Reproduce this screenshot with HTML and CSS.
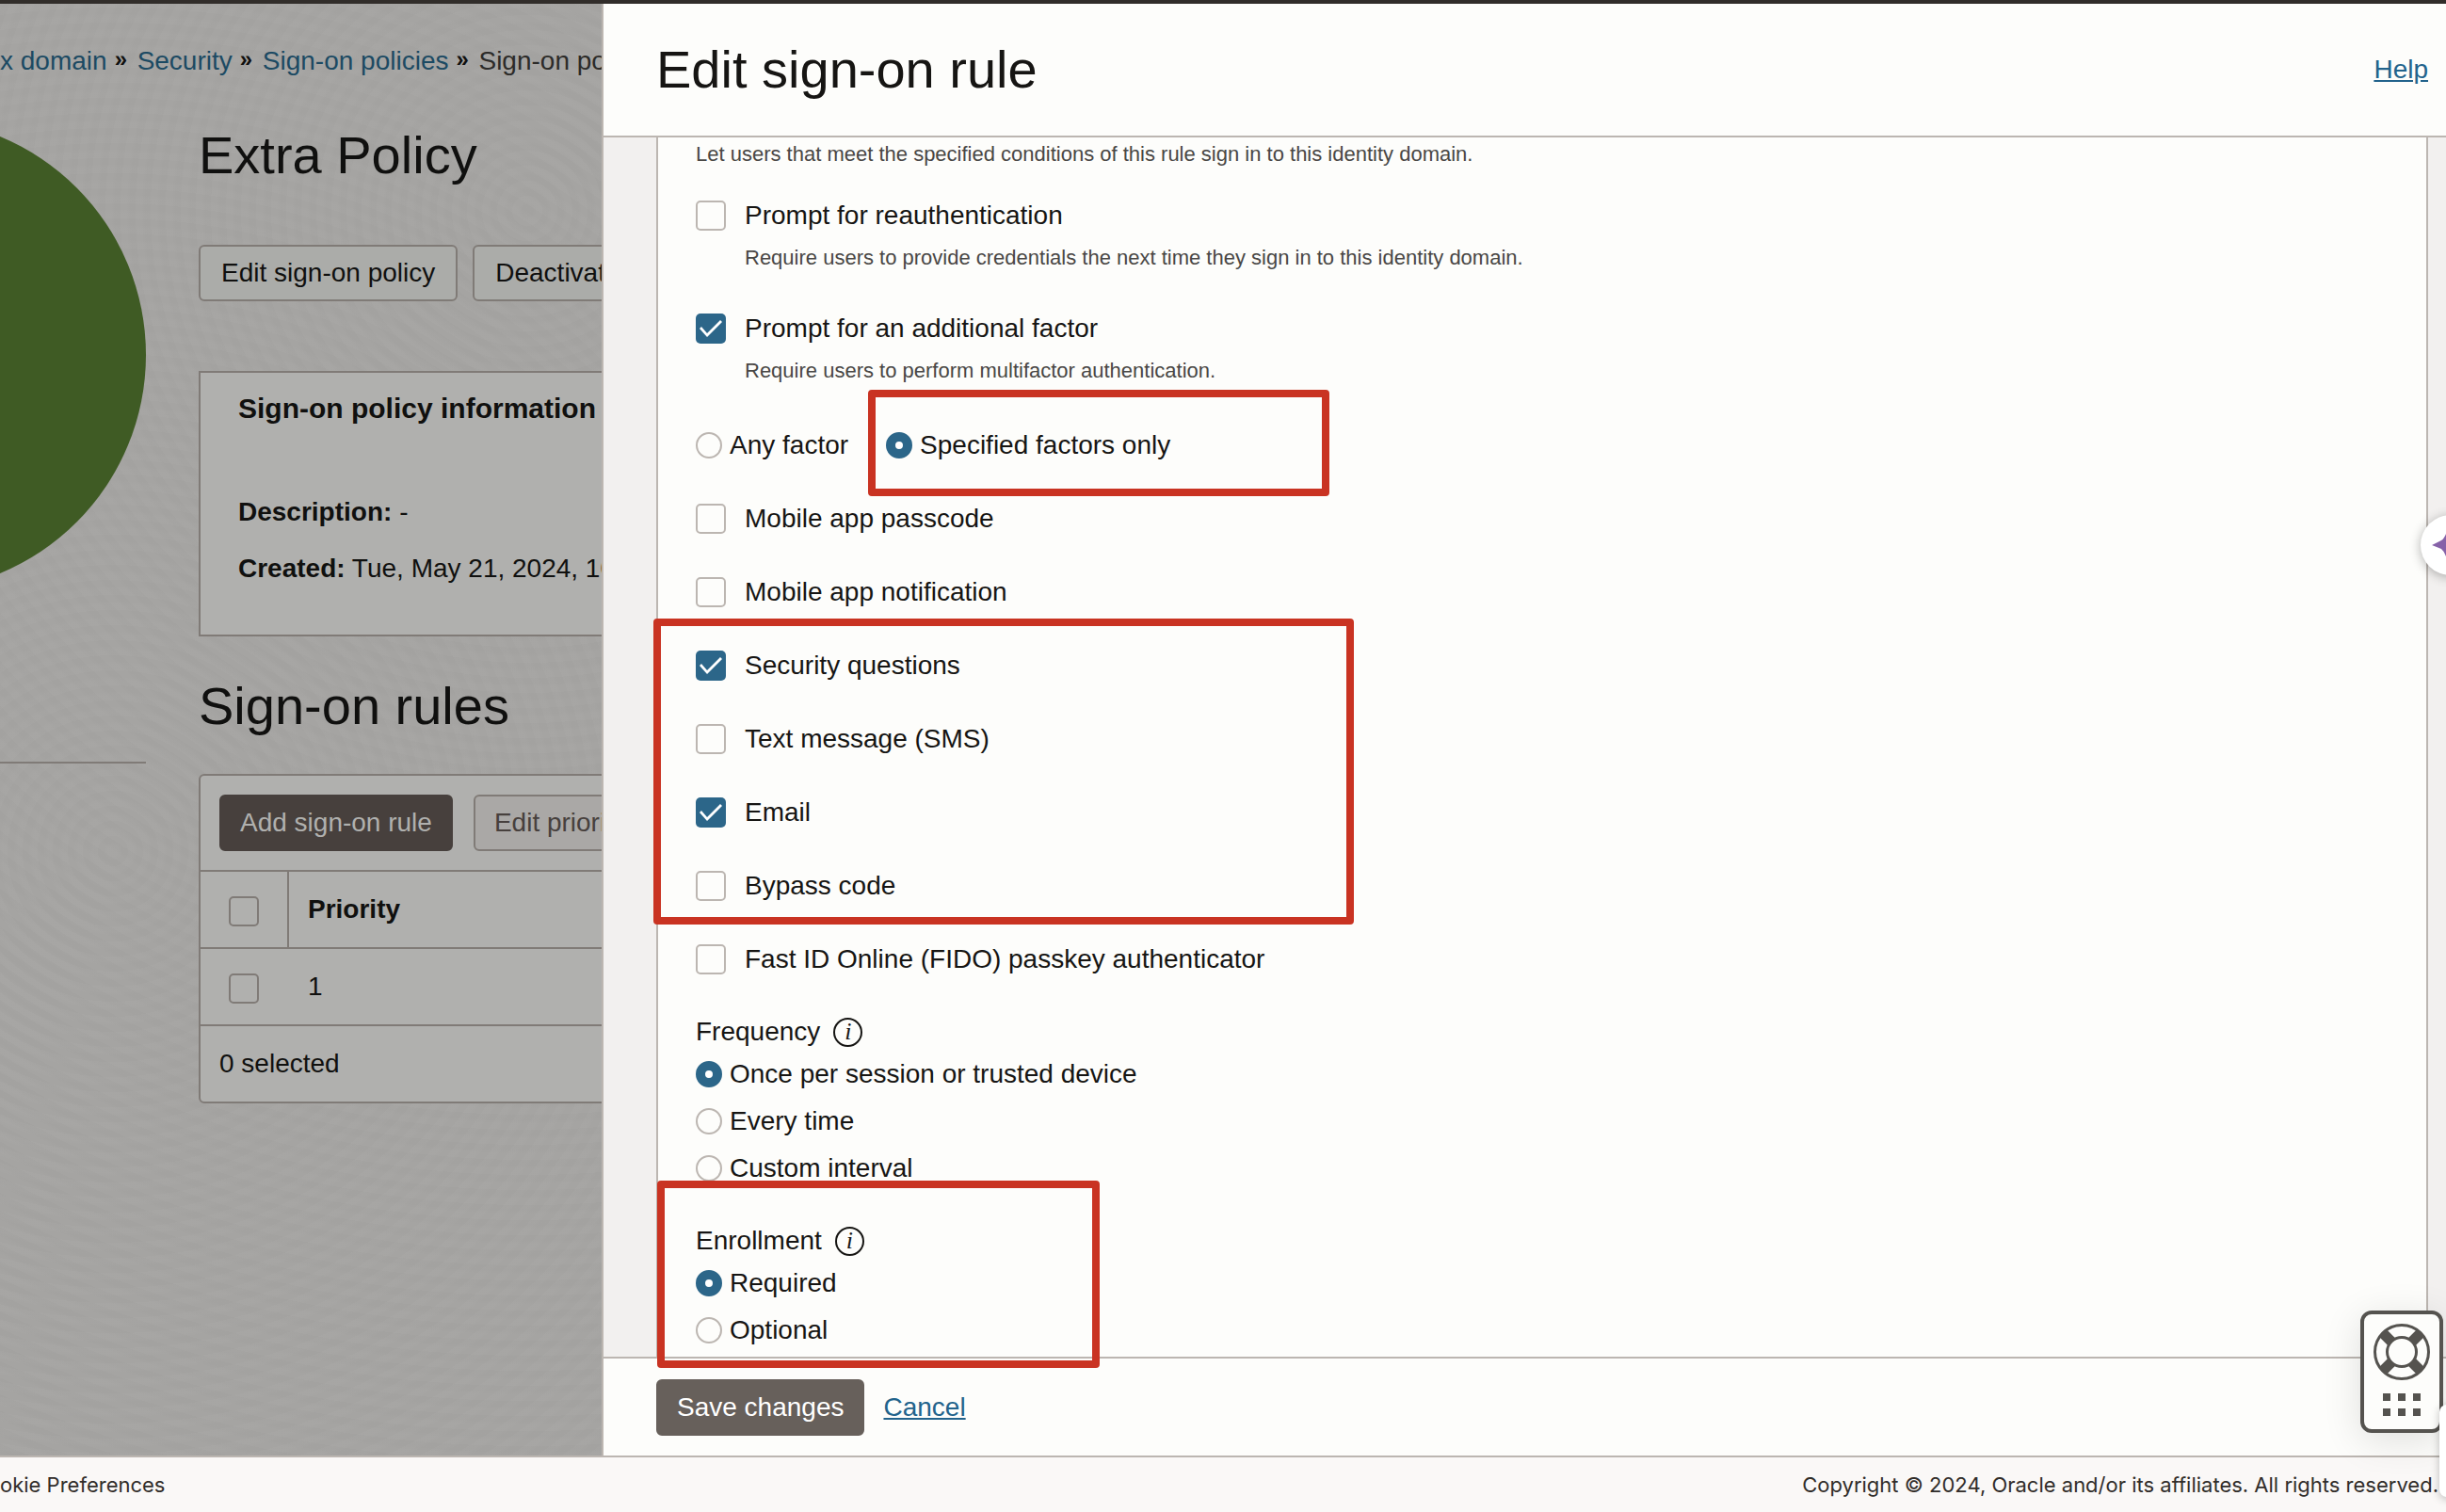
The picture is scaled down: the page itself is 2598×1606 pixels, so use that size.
FILE: index.html
```html
<!DOCTYPE html>
<html lang="en">
<head>
    <meta charset="UTF-8">
    <title>Edit sign-on rule</title>
    <link rel="stylesheet" href="styles.css">
</head>
<body>
<div id="top-line"></div>
<div id="container">
    <div id="page">
        <div class="side">
            <div class="badge"></div>
            <hr>
        </div>
        <div class="content">
            <nav class="crumbs">
                <a href="#">x domain</a><i>»</i>
                <a href="#">Security</a><i>»</i>
                <a href="#">Sign-on policies</a><i>»</i>
                <span>Sign-on po</span>
            </nav>
            <h1>Extra Policy</h1>
            <div class="actions">
                <button class="btn">Edit sign-on policy</button>
                <button class="btn">Deactivate</button>
            </div>
            <div class="info-box">
                <h3>Sign-on policy information</h3>
                <p><b>Description:</b> -</p>
                <p><b>Created:</b> Tue, May 21, 2024, 10</p>
            </div>
            <h2>Sign-on rules</h2>
            <div class="rules">
                <div class="toolbar">
                    <button class="btn dark">Add sign-on rule</button>
                    <button class="btn off">Edit priority</button>
                </div>
                <table>
                    <tr>
                        <th class="pick"><input type="checkbox" aria-label="Select all"></th>
                        <th>Priority</th>
                    </tr>
                    <tr>
                        <td class="pick"><input type="checkbox" aria-label="Select rule 1"></td>
                        <td>1</td>
                    </tr>
                </table>
                <div class="selected">0 selected</div>
            </div>
        </div>
    </div>

    <div id="drawer">
        <div class="drawer-head">
            <h2>Edit sign-on rule</h2>
            <a href="#">Help</a>
        </div>
        <form class="drawer-body" id="rule-form">
            <div class="box">
                <p class="hint">Let users that meet the specified conditions of this rule sign in to this identity domain.</p>
                <div class="prompt">
                    <label class="check"><input type="checkbox">Prompt for reauthentication</label>
                    <p class="hint">Require users to provide credentials the next time they sign in to this identity domain.</p>
                </div>
                <div class="prompt">
                    <label class="check"><input type="checkbox" checked>Prompt for an additional factor</label>
                    <p class="hint">Require users to perform multifactor authentication.</p>
                </div>
                <div class="row factor">
                    <label class="radio"><input type="radio" name="factor">Any factor</label>
                    <div class="marked">
                        <label class="radio"><input type="radio" name="factor" checked>Specified factors only</label>
                        <span class="mark mark-factor"></span>
                    </div>
                </div>
                <div class="row"><label class="check"><input type="checkbox">Mobile app passcode</label></div>
                <div class="row"><label class="check"><input type="checkbox">Mobile app notification</label></div>
                <div class="marked">
                    <div class="row"><label class="check"><input type="checkbox" checked>Security questions</label></div>
                    <div class="row"><label class="check"><input type="checkbox">Text message (SMS)</label></div>
                    <div class="row"><label class="check"><input type="checkbox" checked>Email</label></div>
                    <div class="row"><label class="check"><input type="checkbox">Bypass code</label></div>
                    <span class="mark mark-list"></span>
                </div>
                <div class="row"><label class="check"><input type="checkbox">Fast ID Online (FIDO) passkey authenticator</label></div>

                <div class="group frequency">
                    <div class="legend">Frequency <button type="button" class="tip" aria-label="About frequency">i</button></div>
                    <label class="radio"><input type="radio" name="freq" checked>Once per session or trusted device</label>
                    <label class="radio"><input type="radio" name="freq">Every time</label>
                    <label class="radio"><input type="radio" name="freq">Custom interval</label>
                </div>
                <div class="group enrollment marked">
                    <div class="legend">Enrollment <button type="button" class="tip" aria-label="About enrollment">i</button></div>
                    <label class="radio"><input type="radio" name="enroll" checked>Required</label>
                    <label class="radio"><input type="radio" name="enroll">Optional</label>
                    <span class="mark mark-enroll"></span>
                </div>
            </div>
        </form>
        <div class="drawer-foot">
            <button class="btn save" form="rule-form" type="button">Save changes</button>
            <a href="#">Cancel</a>
        </div>
    </div>
</div>
<footer>
    <span>okie Preferences</span>
    <span>Copyright © 2024, Oracle and/or its affiliates. All rights reserved.</span>
</footer>

<!-- floating helpers -->
<div id="spark">
    <svg width="40" height="40" viewBox="0 0 40 40"><path fill="#8662a8" d="M20 0Q23 17 40 20Q23 23 20 40L17 40Q15 28 10 24L0 20L10 15Q15 12 17 0Z"/></svg>
</div>
<button id="support" aria-label="Support">
    <svg width="60" height="60" viewBox="0 0 60 60" fill="none" stroke="#55534f">
        <circle cx="30" cy="30" r="28.500" stroke-width="3"/>
        <circle cx="30" cy="30" r="15.500" stroke-width="3"/>
        <path stroke-width="11" d="M19 19L10.500 10.500M41 19L49.500 10.500M19 41L10.500 49.500M41 41L49.500 49.500"/>
    </svg>
    <svg width="40" height="24" viewBox="0 0 40 24" fill="#55534f">
        <path d="M0 0h8v8h-8zM16 0h8v8h-8zM32 0h8v8h-8zM0 16h8v8h-8zM16 16h8v8h-8zM32 16h8v8h-8z"/>
    </svg>
</button>
<div id="tab"></div>
</body>
</html>
```
FILE: styles.css
```css
*{
    margin: 0;
    padding: 0;
    box-sizing: border-box;
}
body{
    display: flex;
    flex-direction: column;
    min-height: 100vh;
    position: relative;
    overflow-x: hidden;
    font: 28px/32px "Liberation Sans", Arial, sans-serif;
    color: #161513;
    background: #fdfdfb;
}
h1, h2{
    font-size: 56px;
    line-height: 64px;
    font-weight: normal;
}
button, input{
    font: inherit;
    color: inherit;
}
a{
    color: #22638c;
}
#top-line{
    height: 4px;
    background: #312d2a;
}
#container{
    flex: 1;
    display: grid;
    grid-template-columns: 639px 1fr;
}

/* dimmed page behind the drawer */
#page{
    display: flex;
    overflow: hidden;
    white-space: nowrap;
    color: #10100f;
    background:
        repeating-radial-gradient(circle at 120px 900px, rgba(255,255,255,0.02) 0 6px, transparent 10px 16px),
        repeating-radial-gradient(circle at 560px 220px, rgba(0,0,0,0.01) 0 6px, transparent 10px 16px),
        #a5a4a2;
}
.side{
    width: 155px;
    flex: none;
    overflow: hidden;
    padding-top: 122px;
    display: flex;
    flex-direction: column;
    align-items: flex-end;
}
.badge{
    width: 502px;
    height: 502px;
    flex: none;
    border-radius: 50%;
    background: #3f5b24;
}
.side hr{
    width: 100%;
    margin-top: 181px;
    border: 0;
    border-top: 2px solid #807b77;
}
.content{
    width: 1800px;
    flex: none;
    padding: 42px 0 0 56px;
}
.crumbs{
    display: flex;
    margin-left: -211px;
    line-height: 38px;
    color: #2c2b29;
}
.crumbs a{
    color: #1c4a63;
    text-decoration: none;
}
.crumbs i{
    width: 32px;
    padding-left: 8px;
    font-style: normal;
    font-size: 24px;
    font-weight: bold;
    line-height: 34px;
    color: #10100f;
}
.content h1{
    margin-top: 49px;
}
.actions{
    display: flex;
    gap: 16px;
    margin-top: 63px;
}
.btn{
    height: 60px;
    padding: 0 20px;
    border: 2px solid #807b77;
    border-radius: 6px;
    background: #abaca9;
}
.actions .btn{
    padding: 0 22px;
}
.btn.dark{
    background: #47403d;
    border-color: #47403d;
    color: #b0b0ae;
}
.btn.off{
    background: #aaa8a6;
    color: #47403d;
}
.info-box{
    margin-top: 74px;
    padding: 18px 40px 40px;
    border: 2px solid #807b77;
    background: #b0b0ae;
}
.info-box h3{
    margin-bottom: 60px;
    font-size: 30px;
    line-height: 40px;
}
.info-box p{
    line-height: 60px;
}
.content h2{
    margin-top: 42px;
}
.rules{
    margin-top: 40px;
    border: 2px solid #807b77;
    border-radius: 6px;
    background: #b0b0ae;
}
.toolbar{
    display: flex;
    gap: 22px;
    padding: 20px;
}
.rules table{
    width: 100%;
    border-collapse: separate;
    border-spacing: 0;
}
.rules th, .rules td{
    height: 82px;
    padding-left: 20px;
    border-top: 2px solid #807b77;
    text-align: left;
}
.rules .pick{
    width: 94px;
    padding-left: 30px;
    padding-top: 4px;
}
.rules th.pick{
    border-right: 2px solid #807b77;
}
.selected{
    padding: 24px 20px;
    border-top: 2px solid #807b77;
}

/* form controls */
input[type=checkbox], input[type=radio]{
    appearance: none;
    flex: none;
    display: block;
    width: 32px;
    height: 32px;
    border: 2px solid #bcb6b1;
    border-radius: 5px;
}
#page input{
    border-color: #807b77;
}
input[type=checkbox]:checked{
    border: 0;
    background: #2c6689;
}
input[type=checkbox]:checked::before{
    content: "";
    display: block;
    height: 32px;
    background: #fff;
    clip-path: polygon(4px 16px, 6px 14px, 12px 21px, 26px 7px, 28px 9px, 12px 25px);
}
input[type=radio]{
    width: 28px;
    height: 28px;
    border-radius: 50%;
}
input[type=radio]:checked{
    border: 10px solid #2c6689;
    background: #fff;
}

/* drawer */
#drawer{
    display: flex;
    flex-direction: column;
    border-left: 2px solid #bcb6b1;
    background: #fdfdfb;
}
.drawer-head{
    display: flex;
    justify-content: space-between;
    align-items: center;
    height: 142px;
    padding: 0 19px 0 56px;
    border-bottom: 2px solid #bcb6b1;
}
.drawer-body{
    flex: 1;
    display: flex;
    padding: 0 19px 0 56px;
    background: #f2f0ef;
}
.box{
    flex: 1;
    padding: 2px 40px 3px;
    border: solid #bcb6b1;
    border-width: 0 2px;
    background: #fdfdfb;
}
.hint{
    font-size: 22px;
    color: #494745;
}
.prompt{
    margin-top: 33px;
}
.prompt + .prompt{
    margin-top: 43px;
}
.prompt .hint{
    margin: 13px 0 0 52px;
}
.check{
    display: flex;
    align-items: center;
    gap: 20px;
}
.radio{
    display: flex;
    align-items: center;
    gap: 8px;
}
.row{
    display: flex;
    align-items: center;
    height: 78px;
}
.factor{
    gap: 40px;
    margin-top: 24px;
}
.group .radio{
    height: 50px;
}
.frequency{
    margin-top: 18px;
}
.enrollment{
    margin-top: 32px;
}
.legend{
    display: flex;
    align-items: center;
    gap: 14px;
    height: 40px;
}
.tip{
    width: 31px;
    height: 31px;
    border: 2px solid #161513;
    border-radius: 50%;
    background: none;
    font: italic 26px/24px "Liberation Serif", serif;
}
.marked{
    position: relative;
}
.mark{
    position: absolute;
    border: 8px solid #c93322;
    border-radius: 4px;
}
.mark-factor{
    left: -19px;
    top: -43px;
    width: 490px;
    height: 113px;
}
.mark-list{
    left: -45px;
    top: -11px;
    width: 744px;
    height: 325px;
}
.mark-enroll{
    left: -41px;
    top: -44px;
    width: 470px;
    height: 199px;
}
.drawer-foot{
    display: flex;
    align-items: center;
    gap: 20px;
    height: 105px;
    padding: 0 56px;
    border-top: 2px solid #bcb6b1;
}
.btn.save{
    background: #67605b;
    border-color: #67605b;
    color: #fff;
}
footer{
    display: flex;
    justify-content: space-between;
    align-items: center;
    height: 60px;
    padding-right: 8px;
    border-top: 2px solid #bcb6b1;
    background: #faf8f7;
    font: 22px/32px Inter, sans-serif;
    color: #312d2a;
}

/* floating helpers */
#spark{
    position: absolute;
    top: 547px;
    right: -37px;
    width: 64px;
    height: 64px;
    padding: 12px;
    border-radius: 50%;
    background: #fff;
    box-shadow: 0 2px 12px rgba(0,0,0,0.3);
}
#support{
    position: absolute;
    right: 3px;
    bottom: 84px;
    width: 88px;
    height: 130px;
    padding-top: 10px;
    display: flex;
    flex-direction: column;
    align-items: center;
    gap: 14px;
    border: 4px solid #55534f;
    border-radius: 12px;
    background: #fdfdfb;
    box-shadow: 0 8px 40px rgba(0,0,0,0.12);
}
#tab{
    position: absolute;
    right: -20px;
    bottom: 16px;
    width: 27px;
    height: 98px;
    border-radius: 8px;
    background: #fff;
    box-shadow: 0 2px 10px rgba(0,0,0,0.25);
}
```
